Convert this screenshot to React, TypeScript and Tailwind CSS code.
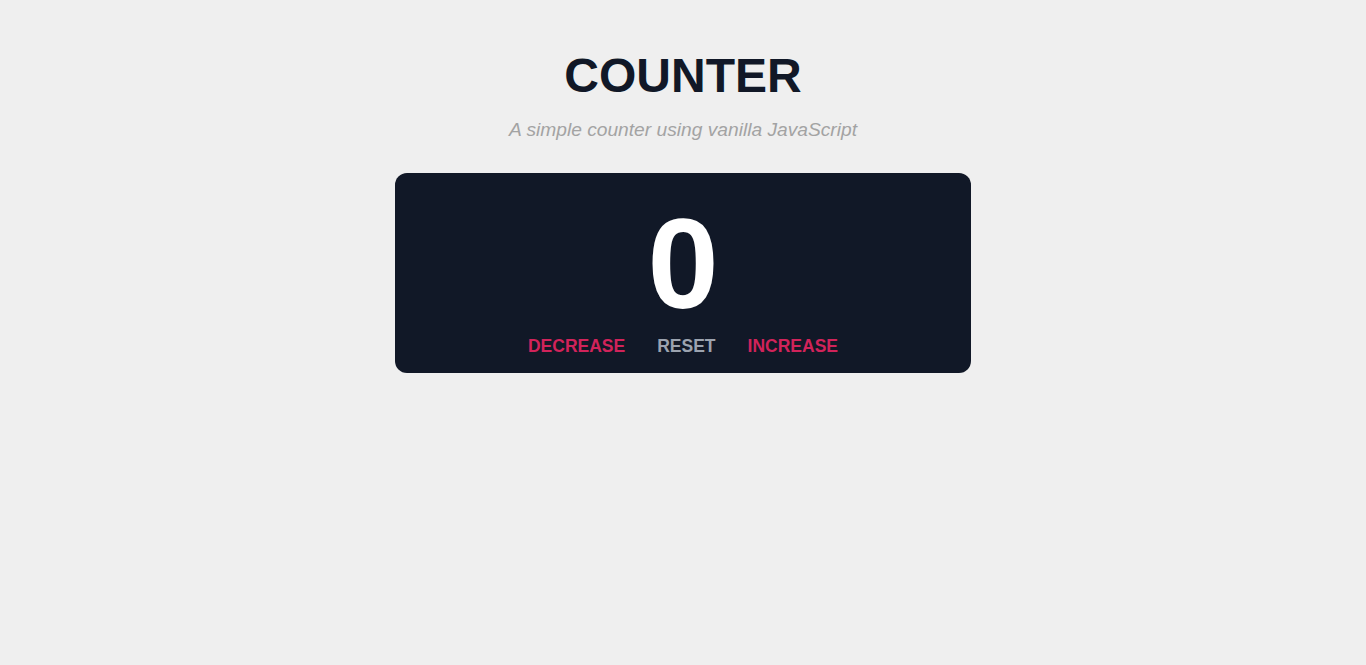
import { useState } from 'react';

const App = () => {
  const [count, setCount] = useState(0);

  return (
    <div className="min-h-screen bg-[#efefef] pt-[52px] font-['Liberation_Sans',Arial,sans-serif]">
      <div className="flex flex-col items-center">
        <h1 className="text-5xl leading-none font-bold text-[#111827]">COUNTER</h1>
        <p className="mt-4 text-[19.2px] leading-7 italic text-[#a3a3a3]">
          A simple counter using vanilla JavaScript
        </p>
        <div className="mt-[29px] flex h-[200px] w-[576px] flex-col items-center rounded-xl bg-[#111827] pt-[27px]">
          <span className="text-9xl leading-none font-bold text-white">{count}</span>
          <div className="mt-[4px] flex gap-8 text-[17.5px] leading-7 font-bold">
            <button className="text-[#d1235a]" onClick={() => setCount((c) => c - 1)}>
              DECREASE
            </button>
            <button className="text-[#9ca3af]" onClick={() => setCount(0)}>
              RESET
            </button>
            <button className="text-[#d1235a]" onClick={() => setCount((c) => c + 1)}>
              INCREASE
            </button>
          </div>
        </div>
      </div>
    </div>
  );
};

export default App;
